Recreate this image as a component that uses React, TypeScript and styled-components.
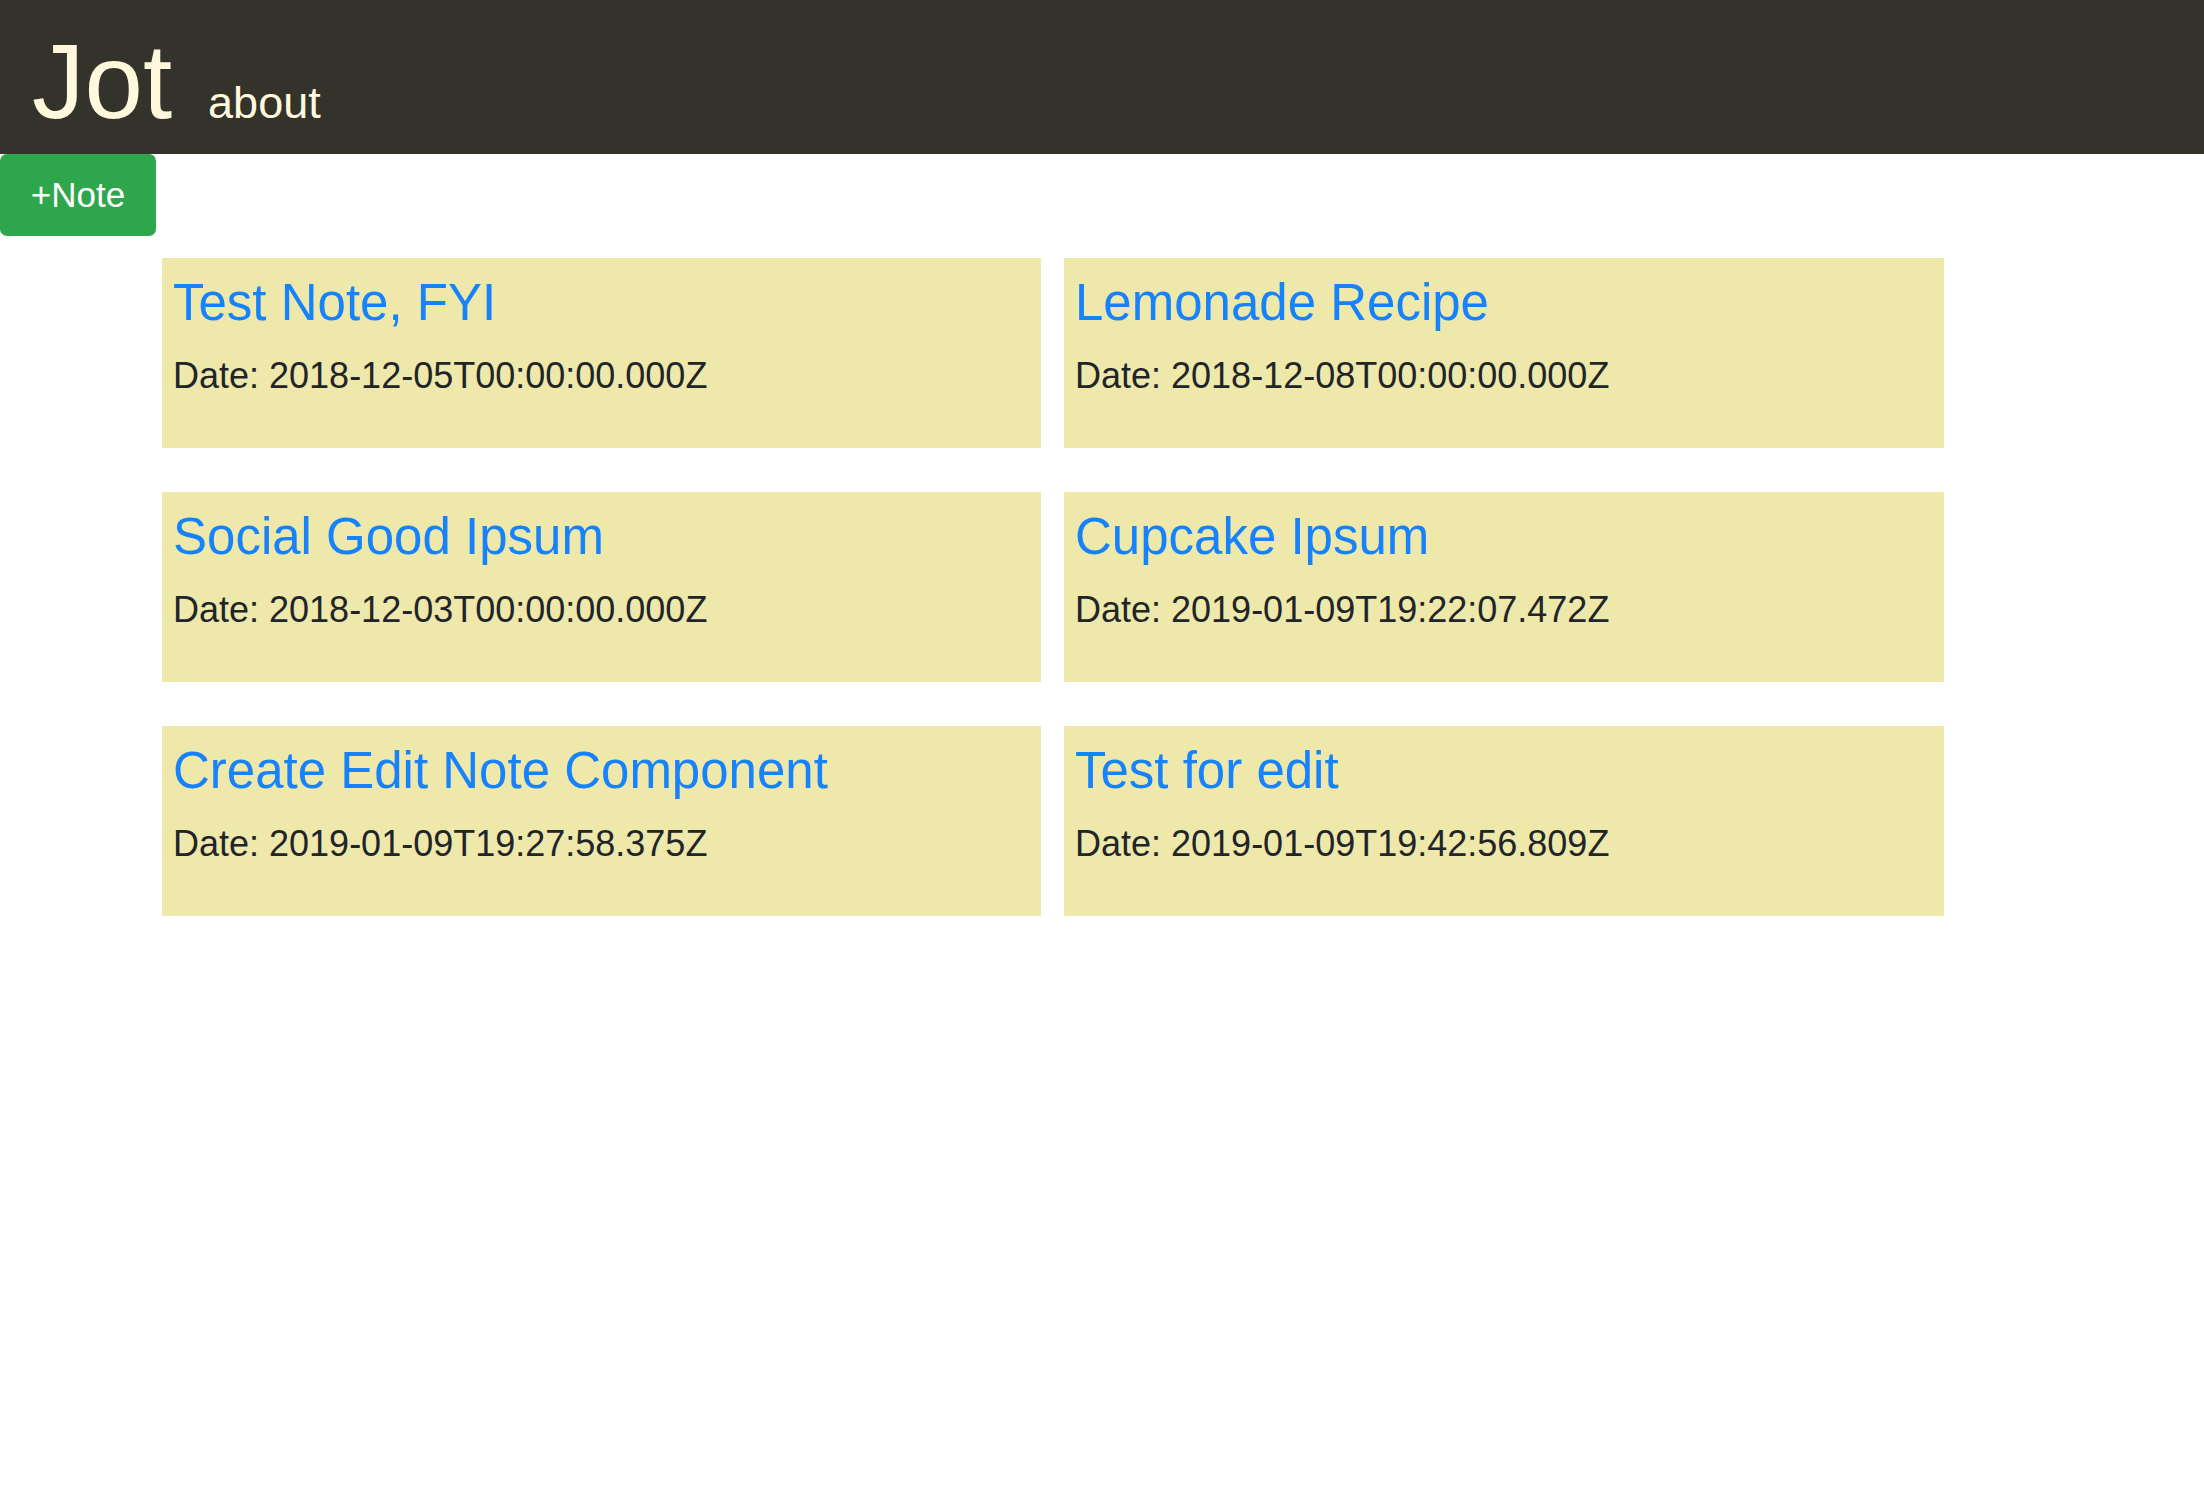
import styled, { createGlobalStyle } from 'styled-components';

const GlobalStyle = createGlobalStyle`
  html, body {
    margin: 0;
    padding: 0;
    background: #fff;
    font-family: "Liberation Sans", Arial, sans-serif;
    color: #212529;
  }
`;

const Header = styled.header`
  height: 154px;
  box-sizing: border-box;
  padding: 29px 32px 0;
  background: #33332b;
  display: flex;
  align-items: baseline;
  gap: 36px;
`;

const Brand = styled.h1`
  margin: 0;
  font-size: 105px;
  line-height: 1;
  font-weight: 400;
  color: #fff8dc;
`;

const NavLink = styled.a`
  font-size: 45px;
  line-height: 1;
  color: #fff8dc;
  text-decoration: none;
`;

const AddButton = styled.button`
  display: block;
  width: 156px;
  height: 82px;
  padding: 0;
  border: none;
  border-radius: 7px;
  background: #2ea74c;
  color: #fff;
  font-family: inherit;
  font-size: 35px;
  cursor: pointer;
`;

const NoteGrid = styled.main`
  display: grid;
  grid-template-columns: 879px 880px;
  column-gap: 23px;
  row-gap: 44px;
  margin: 22px 0 0 162px;
`;

const NoteCard = styled.div`
  height: 190px;
  box-sizing: border-box;
  padding: 15px 11px 0;
  background: #eee8aa;
`;

const NoteTitle = styled.a`
  display: block;
  font-size: 51px;
  line-height: 60px;
  color: #1682fb;
  text-decoration: none;
`;

const NoteDate = styled.p`
  margin: 17px 0 0;
  font-size: 36px;
  line-height: 52px;
  color: #212529;
`;

const notes = [
  { title: 'Test Note, FYI', date: '2018-12-05T00:00:00.000Z' },
  { title: 'Lemonade Recipe', date: '2018-12-08T00:00:00.000Z' },
  { title: 'Social Good Ipsum', date: '2018-12-03T00:00:00.000Z' },
  { title: 'Cupcake Ipsum', date: '2019-01-09T19:22:07.472Z' },
  { title: 'Create Edit Note Component', date: '2019-01-09T19:27:58.375Z' },
  { title: 'Test for edit', date: '2019-01-09T19:42:56.809Z' },
];

const App = () => {
  return (
    <>
      <GlobalStyle />
      <Header>
        <Brand>Jot</Brand>
        <NavLink href="#">about</NavLink>
      </Header>
      <AddButton>+Note</AddButton>
      <NoteGrid>
        {notes.map((note) => (
          <NoteCard key={note.title}>
            <NoteTitle href="#">{note.title}</NoteTitle>
            <NoteDate>Date: {note.date}</NoteDate>
          </NoteCard>
        ))}
      </NoteGrid>
    </>
  );
};

export default App;
